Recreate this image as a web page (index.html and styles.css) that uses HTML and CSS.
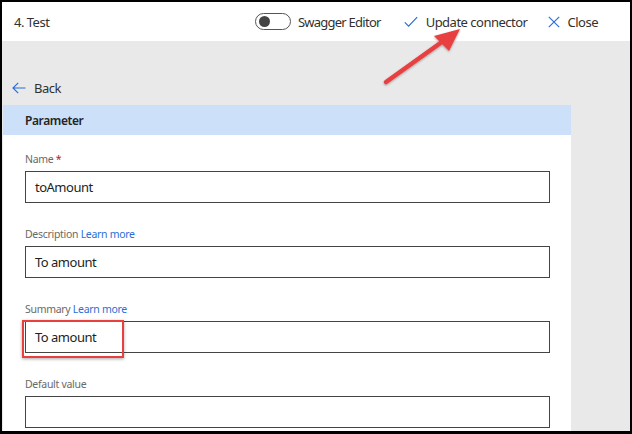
FILE: index.html
```html
<!DOCTYPE html>
<html>
<head>
<meta charset="utf-8">
<link rel="stylesheet" href="styles.css">
</head>
<body>
<div class="frame">
  <header class="topbar">
    <div class="title">4. Test</div>
    <div class="actions">
      <div class="toggle-wrap">
        <span class="toggle"><span class="knob"></span></span>
        <span class="act-label swagger">Swagger Editor</span>
      </div>
      <div class="action update">
        <svg class="icon" width="14" height="12" viewBox="0 0 14 12"><path d="M0.8 6.4 L4.6 10.2 L13.2 1.2" fill="none" stroke="#2b6fd6" stroke-width="1.2"/></svg>
        <span class="act-label">Update connector</span>
      </div>
      <div class="action close">
        <svg class="icon" width="12" height="12" viewBox="0 0 12 12"><path d="M0.8 0.8 L11.2 11.2 M11.2 0.8 L0.8 11.2" fill="none" stroke="#2b6fd6" stroke-width="1.2"/></svg>
        <span class="act-label">Close</span>
      </div>
    </div>
  </header>
  <main class="content">
    <div class="back">
      <svg class="back-icon" width="14" height="12" viewBox="0 0 14 12"><path d="M13.5 6 H1 M6.2 0.8 L1 6 L6.2 11.2" fill="none" stroke="#2b6fd6" stroke-width="1.2"/></svg>
      <span>Back</span>
    </div>
    <section class="panel">
      <div class="panel-head">Parameter</div>
      <div class="panel-body">
        <div class="field">
          <div class="label">Name <span class="req">*</span></div>
          <div class="input">toAmount</div>
        </div>
        <div class="field">
          <div class="label">Description <span class="link">Learn more</span></div>
          <div class="input">To amount</div>
        </div>
        <div class="field">
          <div class="label">Summary <span class="link">Learn more</span></div>
          <div class="input">To amount</div>
        </div>
        <div class="field">
          <div class="label">Default value</div>
          <div class="input"></div>
        </div>
      </div>
    </section>
  </main>
  <div class="highlight-box"></div>
  <svg class="callout-arrow" width="632" height="434" viewBox="0 0 632 434">
    <defs>
      <filter id="sh" x="-20%" y="-20%" width="140%" height="140%">
        <feDropShadow dx="0" dy="1" stdDeviation="1" flood-color="#000" flood-opacity="0.35"/>
      </filter>
    </defs>
    <g filter="url(#sh)">
      <line x1="386" y1="82" x2="446" y2="39" stroke="#e8403f" stroke-width="4.5" stroke-linecap="round"/>
      <polygon points="460,29 434,36 449,51" fill="#e8403f"/>
    </g>
  </svg>
</div>
</body>
</html>
```

FILE: styles.css
```css
* { box-sizing: border-box; }
html, body {
  margin: 0;
  padding: 0;
  background: #000;
}
body {
  width: 632px;
  height: 434px;
  overflow: hidden;
  font-family: "Noto Sans", "Open Sans", sans-serif;
  color: #323130;
}
.frame {
  position: relative;
  margin: 2px 2px 0 2px;
  width: 628px;
  height: 429px;
  background: #e9e9e9;
  display: flex;
  flex-direction: column;
  overflow: hidden;
}
.topbar {
  height: 39px;
  background: #fff;
  display: flex;
  align-items: center;
  padding: 0 32px 0 12px;
  font-size: 13px;
  letter-spacing: -0.5px;
  flex: none;
}
.title { color: #323130; }
.actions {
  margin-left: auto;
  display: flex;
  align-items: center;
}
.toggle-wrap { display: flex; align-items: center; gap: 7px; margin-right: 23px; }
.swagger { letter-spacing: -0.75px; }
.toggle {
  width: 36px;
  height: 17px;
  border: 1px solid #555;
  border-radius: 9px;
  display: flex;
  align-items: center;
  padding-left: 3px;
}
.knob {
  width: 11px;
  height: 11px;
  border-radius: 50%;
  background: #444;
}
.action { display: flex; align-items: center; gap: 8px; }
.update { margin-right: 20px; }
.act-label { color: #323130; }
.content {
  flex: 1;
  display: flex;
  flex-direction: column;
}
.back {
  height: 24px;
  margin-top: 35px;
  display: flex;
  align-items: center;
  gap: 8px;
  padding-left: 10px;
  font-size: 13px;
  letter-spacing: -0.5px;
  color: #323130;
}
.panel {
  margin-top: 5px;
  margin-left: 1px;
  width: 568px;
  flex: 1;
  background: #fff;
}
.panel-head {
  height: 30px;
  background: #cce0fa;
  display: flex;
  align-items: center;
  padding-left: 22px;
  font-size: 12px;
  font-weight: 600;
  letter-spacing: -0.4px;
  color: #252423;
}
.panel-body {
  padding: 16px 21px 0 22px;
  display: flex;
  flex-direction: column;
  gap: 23px;
}
.field { display: flex; flex-direction: column; gap: 4px; }
.label {
  height: 16px;
  line-height: 16px;
  font-size: 10.5px;
  letter-spacing: -0.3px;
  color: #6b6966;
}
.req { color: #a4262c; }
.link { color: #2b6fd6; }
.input {
  height: 32px;
  border: 1px solid #444;
  display: flex;
  align-items: center;
  padding-left: 9px;
  font-size: 13px;
  letter-spacing: -0.5px;
  color: #201f1e;
}
.highlight-box {
  position: absolute;
  left: 20px;
  top: 318px;
  width: 102px;
  height: 38px;
  border: 2px solid #e8403f;
  box-shadow: 0 1px 3px rgba(0,0,0,0.35);
}
.callout-arrow {
  position: absolute;
  left: -2px;
  top: -2px;
  pointer-events: none;
}
```
